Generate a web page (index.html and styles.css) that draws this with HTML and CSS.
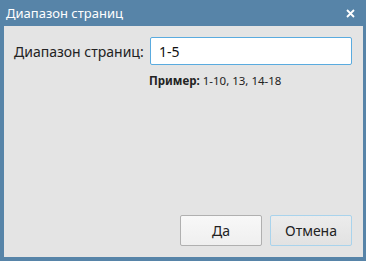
FILE: index.html
```html
<!DOCTYPE html>
<html lang="ru">
<head>
  <meta charset="UTF-8" />
  <title>Диапазон страниц</title>
  <link rel="stylesheet" href="styles.css">
</head>
<body>
  <div class="window">
    <div class="titlebar">
      <span class="title">Диапазон страниц</span>
      <svg class="close" width="9" height="9" viewBox="0 0 9 9">
        <path d="M1 1 L8 8 M8 1 L1 8" stroke="#fff" stroke-width="1.8" />
      </svg>
    </div>
    <div class="content">
      <div class="row">
        <label for="range">Диапазон страниц:</label>
        <input type="text" id="range" value="1-5">
      </div>
      <div class="hint"><b>Пример:</b> 1-10, 13, 14-18</div>
      <div class="buttons">
        <button class="btn ok">Да</button>
        <button class="btn cancel">Отмена</button>
      </div>
    </div>
  </div>
</body>
</html>
```
FILE: styles.css
```css
html, body {
  margin: 0;
  padding: 0;
}
body {
  width: 366px;
  height: 261px;
  background-color: #5784a8;
  font-family: 'Noto Sans', sans-serif;
}
.window {
  display: flex;
  flex-direction: column;
  height: 261px;
  padding: 0 3px 4px 4px;
  box-sizing: border-box;
}
.titlebar {
  height: 26px;
  display: flex;
  align-items: center;
  justify-content: space-between;
  padding: 0 8px 0 2px;
  color: #fff;
}
.title {
  font-size: 13px;
}
.close {
  display: block;
}
.content {
  flex: 1;
  background-color: #e4e4e4;
  display: flex;
  flex-direction: column;
  padding: 11px 11px 11px 10px;
}
.row {
  display: flex;
  align-items: center;
}
label {
  width: 136px;
  font-size: 14px;
  color: #222;
}
input {
  width: 202px;
  height: 28px;
  box-sizing: border-box;
  border: 1px solid #5aabdf;
  border-radius: 2px;
  padding: 0 8px;
  font-family: 'Noto Sans', sans-serif;
  font-size: 14px;
  color: #111;
  background-color: #fff;
  outline: none;
}
.hint {
  margin: 8px 0 0 135px;
  font-size: 11.5px;
  color: #222;
}
.buttons {
  margin-top: auto;
  display: flex;
  justify-content: flex-end;
  gap: 8px;
}
.btn {
  width: 82px;
  height: 31px;
  font-family: 'Noto Sans', sans-serif;
  font-size: 14px;
  color: #222;
  border-radius: 2px;
  cursor: pointer;
}
.ok {
  background: linear-gradient(#f8f8f8, #efefef);
  border: 1px solid #b0b0b0;
}
.cancel {
  background: linear-gradient(#ececec, #e2e2e2);
  border: 1px solid #a9d3ec;
}
```
